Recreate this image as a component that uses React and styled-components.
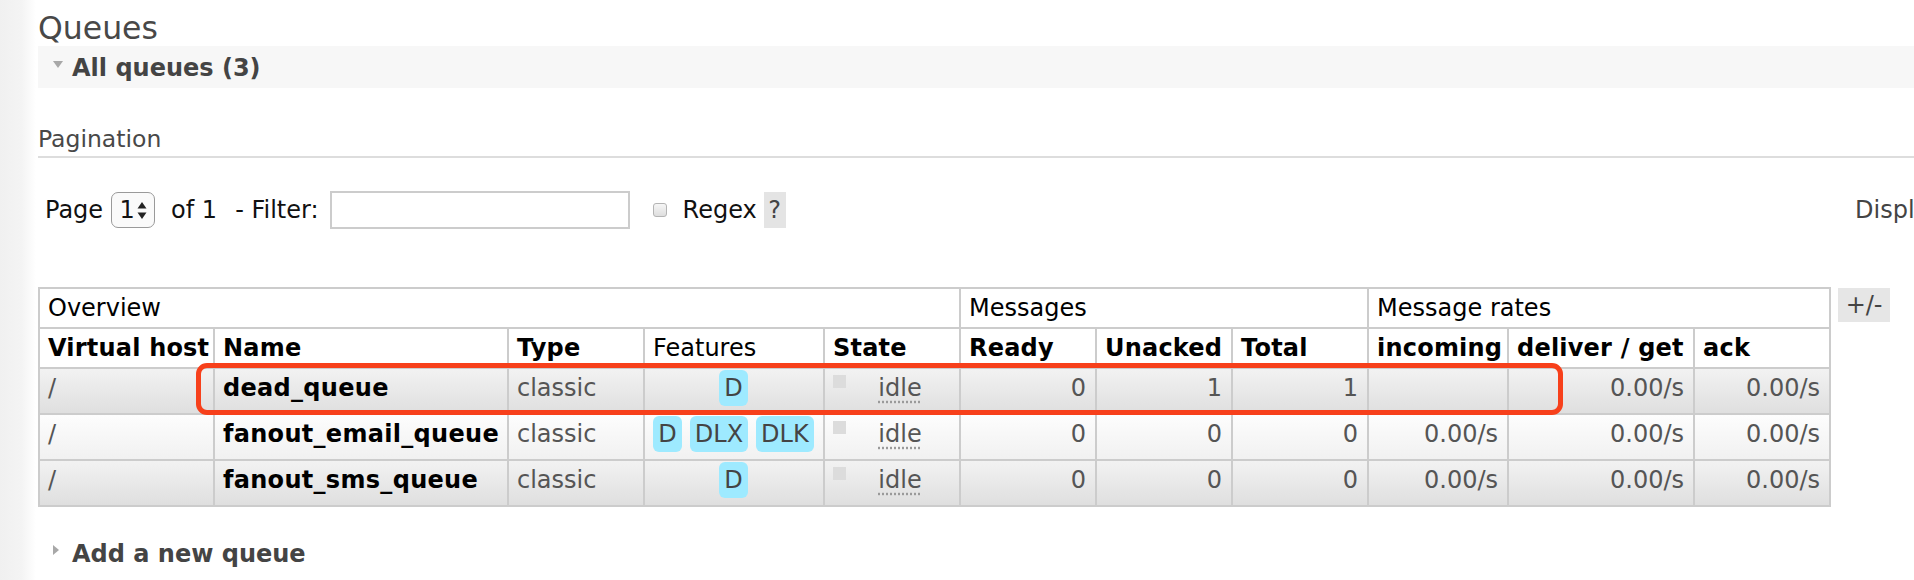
import React from 'react';
import styled, { createGlobalStyle } from 'styled-components';

const GlobalStyle = createGlobalStyle`
  html, body {
    margin: 0;
    padding: 0;
    overflow: hidden;
  }
  body {
    font-family: "DejaVu Sans", Verdana, sans-serif;
    color: #484848;
    background-color: #fff;
    background-image: linear-gradient(to right, #f0f0f0 0, #f4f4f4 22px, #fff 36px);
  }
`;

const Main = styled.main`
  padding-left: 38px;
`;

const Title = styled.h1`
  margin: 11px 0 0;
  font-size: 31.5px;
  line-height: 35px;
  font-weight: normal;
  color: #484848;
`;

const SectionHead = styled.h2`
  display: flex;
  align-items: center;
  height: 42px;
  margin: ${p => (p.$gap ? `${p.$gap}px 0 0` : '0')};
  padding: 2px 0 0 15px;
  box-sizing: border-box;
  background: ${p => (p.$shaded ? '#f7f7f7' : 'transparent')};
  font-size: 24px;
  font-weight: bold;
  color: #444;
`;

const Toggle = styled.span`
  flex: none;
  width: 19px;
  margin-top: -8px;
  &::before {
    content: '';
    display: block;
    width: 0;
    height: 0;
    border-style: solid;
    border-color: transparent;
    ${p =>
      p.$open
        ? 'border-width: 7px 5.5px 0 5.5px; border-top-color: #a8a8a8;'
        : 'border-width: 5.5px 0 5.5px 6px; border-left-color: #a8a8a8;'}
  }
`;

const SubHead = styled.h3`
  margin: 35px 0 0;
  font-size: 23.5px;
  line-height: 33px;
  font-weight: normal;
  color: #484848;
  border-bottom: 2px solid #ddd;
`;

const PagerRow = styled.div`
  display: flex;
  align-items: center;
  height: 38px;
  margin-top: 33px;
  padding-left: 7px;
  font-size: 24px;
  color: #111;
  white-space: nowrap;
`;

const PagerControls = styled.div`
  display: flex;
  align-items: center;
  flex: 0 0 1810px;
`;

const Label = styled.span`
  margin-left: ${p => p.$ml || 0}px;
  color: ${p => (p.$muted ? '#444' : '#111')};
`;

const PageSelect = styled.span`
  display: inline-flex;
  align-items: center;
  justify-content: center;
  gap: 2px;
  width: 44px;
  height: 36px;
  margin-left: 8px;
  box-sizing: border-box;
  border: 1.5px solid #9a9a9a;
  border-radius: 7px;
  background: #fafafa;
  font-size: 24px;
`;

const FilterInput = styled.input`
  width: 300px;
  height: 38px;
  margin-left: 11px;
  box-sizing: border-box;
  border: 2px solid #ccc;
  padding: 0 6px;
  font: inherit;
  outline: none;
`;

const CheckBox = styled.span`
  width: 14px;
  height: 14px;
  margin-left: 23px;
  box-sizing: border-box;
  border: 1px solid #b4b4b4;
  border-radius: 3px;
  background: linear-gradient(#f6f6f6, #dedede);
`;

const Help = styled.span`
  display: inline-flex;
  align-items: center;
  justify-content: center;
  width: 22px;
  height: 36px;
  margin-left: 7px;
  background: #e4e4e4;
  color: #444;
`;

const TableRow = styled.div`
  display: flex;
  align-items: flex-start;
  gap: 7px;
  margin-top: 58px;
`;

const TableBox = styled.div`
  position: relative;
`;

const Grid = styled.table`
  border-collapse: collapse;
  table-layout: fixed;
  width: 1791px;
  font-size: 24px;
  background: #fff;
`;

const HeadCell = styled.th`
  height: 38px;
  padding: 0 8px;
  border: 2px solid #ccc;
  text-align: left;
  vertical-align: middle;
  font-weight: ${p => (p.$plain ? 'normal' : 'bold')};
  letter-spacing: ${p => (p.$plain ? '0' : '0.2px')};
  color: #000;
  white-space: nowrap;
  overflow: hidden;
`;

const Cell = styled.td`
  height: 36px;
  padding: 1px 9px 7px 8px;
  border: 2px solid #ccc;
  vertical-align: middle;
  line-height: 30px;
  white-space: nowrap;
  overflow: hidden;
  text-align: ${p => p.$align || 'left'};
  font-weight: ${p => (p.$strong ? 'bold' : 'normal')};
  letter-spacing: ${p => (p.$strong ? '0.3px' : '0')};
  color: ${p => (p.$strong ? '#000' : '#555')};
  background: ${p =>
    p.$alt
      ? 'linear-gradient(#fdfdfd, #f1f1f1)'
      : 'linear-gradient(#f2f2f2, #dfdfdf)'};
`;

const FeatureList = styled.div`
  display: flex;
  justify-content: center;
  gap: 8px;
`;

const Badge = styled.abbr`
  display: inline-block;
  padding: 3px 5px;
  line-height: 30px;
  border-radius: 6px;
  background: #9eeaff;
  color: #444;
  text-decoration: none;
`;

const StateWrap = styled.div`
  display: flex;
  align-items: flex-start;
`;

const StateDot = styled.span`
  flex: none;
  width: 13px;
  height: 13px;
  margin-top: 2px;
  background: #dcdcdc;
`;

const StateText = styled.span`
  flex: 1;
  text-align: center;
  margin-left: 4px;
  & abbr {
    text-decoration: underline dotted #9a9a9a;
    text-underline-offset: 5px;
    color: #555;
  }
`;

const ColumnToggle = styled.span`
  display: flex;
  align-items: center;
  justify-content: center;
  width: 52px;
  height: 34px;
  margin-top: 1px;
  background: #e6e6e6;
  font-size: 24px;
  color: #444;
`;

const Highlight = styled.div`
  position: absolute;
  left: 158px;
  top: 76px;
  width: 1367px;
  height: 52px;
  box-sizing: border-box;
  border: 5px solid #f7401b;
  border-radius: 11px;
  pointer-events: none;
`;

const columns = [175, 294, 136, 180, 136, 136, 136, 136, 140, 186, 136];

const queues = [
  { name: 'dead_queue', features: ['D'], ready: 0, unacked: 1, total: 1, incoming: '', deliver: '0.00/s', ack: '0.00/s' },
  { name: 'fanout_email_queue', features: ['D', 'DLX', 'DLK'], ready: 0, unacked: 0, total: 0, incoming: '0.00/s', deliver: '0.00/s', ack: '0.00/s' },
  { name: 'fanout_sms_queue', features: ['D'], ready: 0, unacked: 0, total: 0, incoming: '0.00/s', deliver: '0.00/s', ack: '0.00/s' },
];

function SpinArrows() {
  return (
    <svg width="10" height="17" viewBox="0 0 10 17">
      <path d="M5 0 L9.5 6.5 L0.5 6.5 Z" fill="#222" />
      <path d="M0.5 10.5 L9.5 10.5 L5 17 Z" fill="#222" />
    </svg>
  );
}

export default function App() {
  return (
    <>
      <GlobalStyle />
      <Main>
        <Title>Queues</Title>
        <SectionHead $shaded>
          <Toggle $open />
          All queues (3)
        </SectionHead>

        <SubHead>Pagination</SubHead>
        <PagerRow>
          <PagerControls>
            <Label>Page</Label>
            <PageSelect>
              1<SpinArrows />
            </PageSelect>
            <Label $ml={16}>of 1</Label>
            <Label $ml={18}>- Filter:</Label>
            <FilterInput type="text" />
            <CheckBox />
            <Label $ml={16}>Regex</Label>
            <Help>?</Help>
          </PagerControls>
          <Label $muted>Displaying 3 items , page size up to:</Label>
        </PagerRow>

        <TableRow>
          <TableBox>
            <Grid>
              <colgroup>
                {columns.map((w, i) => (
                  <col key={i} style={{ width: w }} />
                ))}
              </colgroup>
              <thead>
                <tr>
                  <HeadCell $plain colSpan={5}>Overview</HeadCell>
                  <HeadCell $plain colSpan={3}>Messages</HeadCell>
                  <HeadCell $plain colSpan={3}>Message rates</HeadCell>
                </tr>
                <tr>
                  <HeadCell>Virtual host</HeadCell>
                  <HeadCell>Name</HeadCell>
                  <HeadCell>Type</HeadCell>
                  <HeadCell $plain>Features</HeadCell>
                  <HeadCell>State</HeadCell>
                  <HeadCell>Ready</HeadCell>
                  <HeadCell>Unacked</HeadCell>
                  <HeadCell>Total</HeadCell>
                  <HeadCell>incoming</HeadCell>
                  <HeadCell>deliver / get</HeadCell>
                  <HeadCell>ack</HeadCell>
                </tr>
              </thead>
              <tbody>
                {queues.map((q, i) => {
                  const alt = i % 2 === 1;
                  return (
                    <tr key={q.name}>
                      <Cell $alt={alt}>/</Cell>
                      <Cell $alt={alt} $strong>{q.name}</Cell>
                      <Cell $alt={alt}>classic</Cell>
                      <Cell $alt={alt}>
                        <FeatureList>
                          {q.features.map(f => (
                            <Badge key={f}>{f}</Badge>
                          ))}
                        </FeatureList>
                      </Cell>
                      <Cell $alt={alt}>
                        <StateWrap>
                          <StateDot />
                          <StateText>
                            <abbr>idle</abbr>
                          </StateText>
                        </StateWrap>
                      </Cell>
                      <Cell $alt={alt} $align="right">{q.ready}</Cell>
                      <Cell $alt={alt} $align="right">{q.unacked}</Cell>
                      <Cell $alt={alt} $align="right">{q.total}</Cell>
                      <Cell $alt={alt} $align="right">{q.incoming}</Cell>
                      <Cell $alt={alt} $align="right">{q.deliver}</Cell>
                      <Cell $alt={alt} $align="right">{q.ack}</Cell>
                    </tr>
                  );
                })}
              </tbody>
            </Grid>
            <Highlight />
          </TableBox>
          <ColumnToggle>+/-</ColumnToggle>
        </TableRow>

        <SectionHead $gap={25}>
          <Toggle />
          Add a new queue
        </SectionHead>
      </Main>
    </>
  );
}
